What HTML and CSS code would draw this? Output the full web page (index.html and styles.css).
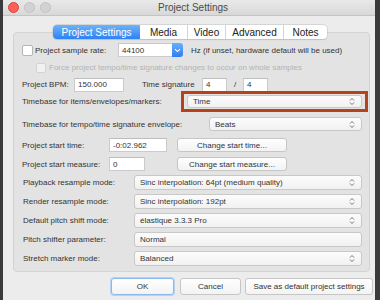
FILE: index.html
```html
<!DOCTYPE html>
<html>
<head>
<meta charset="utf-8">
<link rel="stylesheet" href="styles.css">
</head>
<body>
<div class="window">
  <div class="titlebar">
    <div class="lights">
      <span class="light red"></span>
      <span class="light"></span>
      <span class="light"></span>
    </div>
    <div class="title">Project Settings</div>
  </div>

  <div class="tabs">
    <div class="tab active t-ps">Project Settings</div>
    <div class="tab t-media">Media</div>
    <div class="tab t-video">Video</div>
    <div class="tab t-adv">Advanced</div>
    <div class="tab t-notes">Notes</div>
  </div>

  <div class="group">
    <div class="row r1">
      <span class="check"></span>
      <span class="label l-rate">Project sample rate:</span>
      <div class="srcombo">
        <span class="srfield">44100</span>
        <span class="srbtn"><svg width="7" height="5" viewBox="0 0 7 5"><path d="M1 1.2 L3.5 3.6 L6 1.2" fill="none" stroke="#fff" stroke-width="1.1"/></svg></span>
      </div>
      <span class="hz">Hz (if unset, hardware default will be used)</span>
    </div>

    <div class="row r2">
      <span class="check dis"></span>
      <span class="label disabled">Force project tempo/time signature changes to occur on whole samples</span>
    </div>

    <div class="row r3">
      <span class="label l-bpm">Project BPM:</span>
      <span class="field f-bpm">150.000</span>
      <span class="label l-ts">Time signature</span>
      <span class="field f-ts">4</span>
      <span class="slash">/</span>
      <span class="field f-ts">4</span>
    </div>

    <div class="row r4">
      <span class="label l-tb1">Timebase for items/envelopes/markers:</span>
      <div class="highlight">
        <div class="combo c-full"><span>Time</span><svg class="updown" width="6" height="9" viewBox="0 0 6 9"><path d="M1 3.5 L3 1.5 L5 3.5 M1 5.5 L3 7.5 L5 5.5" fill="none" stroke="#666" stroke-width="0.9"/></svg></div>
      </div>
    </div>

    <div class="row r5">
      <span class="label l-tb2">Timebase for tempo/time signature envelope:</span>
      <div class="combo c-beats"><span>Beats</span><svg class="updown" width="6" height="9" viewBox="0 0 6 9"><path d="M1 3.5 L3 1.5 L5 3.5 M1 5.5 L3 7.5 L5 5.5" fill="none" stroke="#666" stroke-width="0.9"/></svg></div>
    </div>

    <div class="row r6">
      <span class="label l-start">Project start time:</span>
      <span class="field f-time">-0:02.962</span>
      <span class="btn b-change g10">Change start time...</span>
    </div>

    <div class="row r7">
      <span class="label l-start">Project start measure:</span>
      <span class="field f-meas">0</span>
      <span class="btn b-change g32">Change start measure...</span>
    </div>

    <div class="row r8">
      <span class="label l-mode">Playback resample mode:</span>
      <div class="combo c-mode"><span>Sinc interpolation: 64pt (medium quality)</span><svg class="updown" width="6" height="9" viewBox="0 0 6 9"><path d="M1 3.5 L3 1.5 L5 3.5 M1 5.5 L3 7.5 L5 5.5" fill="none" stroke="#666" stroke-width="0.9"/></svg></div>
    </div>

    <div class="row r8">
      <span class="label l-mode">Render resample mode:</span>
      <div class="combo c-mode"><span>Sinc interpolation: 192pt</span><svg class="updown" width="6" height="9" viewBox="0 0 6 9"><path d="M1 3.5 L3 1.5 L5 3.5 M1 5.5 L3 7.5 L5 5.5" fill="none" stroke="#666" stroke-width="0.9"/></svg></div>
    </div>

    <div class="row r8">
      <span class="label l-mode">Default pitch shift mode:</span>
      <div class="combo c-mode"><span>élastique 3.3.3 Pro</span><svg class="updown" width="6" height="9" viewBox="0 0 6 9"><path d="M1 3.5 L3 1.5 L5 3.5 M1 5.5 L3 7.5 L5 5.5" fill="none" stroke="#666" stroke-width="0.9"/></svg></div>
    </div>

    <div class="row r8">
      <span class="label l-mode">Pitch shifter parameter:</span>
      <div class="combo c-mode"><span>Normal</span></div>
    </div>

    <div class="row r8">
      <span class="label l-mode">Stretch marker mode:</span>
      <div class="combo c-mode"><span>Balanced</span><svg class="updown" width="6" height="9" viewBox="0 0 6 9"><path d="M1 3.5 L3 1.5 L5 3.5 M1 5.5 L3 7.5 L5 5.5" fill="none" stroke="#666" stroke-width="0.9"/></svg></div>
    </div>
  </div>

  <div class="actions">
    <span class="btn big ok">OK</span>
    <span class="btn big cancel">Cancel</span>
    <span class="btn big save">Save as default project settings</span>
  </div>
</div>
</body>
</html>
```

FILE: styles.css
```css
html, body {
  margin: 0;
  padding: 0;
}
body {
  width: 380px;
  height: 300px;
  overflow: hidden;
  background: #3a3a3a;
  font-family: "Liberation Sans", Arial, sans-serif;
  font-size: 8px;
  color: #333;
}
.window {
  margin-left: 3px;
  width: 372px;
  height: 300px;
  background: #ececec;
  overflow: hidden;
}
.titlebar {
  height: 15px;
  border-bottom: 1px solid #c4c4c4;
  background: linear-gradient(#e9e9e9, #d8d8d8);
  display: flex;
  align-items: center;
  position: relative;
}
.lights {
  display: flex;
  gap: 5px;
  margin-left: 5px;
  margin-top: 0px;
}
.light {
  width: 9px;
  height: 9px;
  border-radius: 50%;
  background: #d2d2d2;
  border: 0.5px solid #c2c2c2;
}
.light.red {
  background: #fc5f57;
  border-color: #e0443e;
}
.title {
  margin-left: 107px;
  font-size: 10px;
  color: #4a4a4a;
}
.tabs {
  display: flex;
  margin-top: 9px;
  margin-left: 50px;
  height: 14px;
  position: relative;
  z-index: 1;
  width: max-content;
  background: #fff;
  border-radius: 4px;
  box-shadow: 0 0 0 0.5px #c2c2c2, 0 0.5px 1px rgba(0,0,0,0.15);
}
.tab {
  display: flex;
  align-items: center;
  justify-content: center;
  font-size: 10px;
  color: #222;
  height: 14px;
  border-left: 1px solid #d4d4d4;
  box-sizing: border-box;
}
.tab.active {
  border-left: none;
  background: linear-gradient(#6cb3fa, #2f81f4);
  color: #fff;
  border-radius: 4px 0 0 4px;
}
.t-ps { width: 87px; }
.t-media { width: 47px; border-left: none; }
.t-video { width: 38px; }
.t-adv { width: 58px; }
.t-notes { width: 44px; }

.group {
  margin-top: -7px;
  margin-left: 10px;
  width: 357px;
  height: 240px;
  box-sizing: border-box;
  border: 1px solid #d3d3d3;
  border-radius: 4px;
  background: #e3e3e3;
  padding: 10px 0 0 8px;
  display: flex;
  flex-direction: column;
}
.row {
  display: flex;
  align-items: center;
  flex: none;
}
.r1 { height: 14px; }
.r2 { height: 13px; margin-top: 4px; }
.r3 { height: 13px; margin-top: 4px; }
.r4 { height: 21px; }
.r5 { height: 14px; margin-top: 5px; }
.r6 { height: 14px; margin-top: 7px; }
.r7 { height: 14px; margin-top: 5px; }
.r8 { height: 15px; margin-top: 4px; }

.label {
  white-space: nowrap;
  flex: none;
}
.l-rate { width: 83px; margin-left: 2px; }
.l-bpm { width: 52px; }
.l-ts { width: 60px; margin-left: 18px; }
.l-tb1 { width: 159px; }
.l-tb2 { width: 187px; }
.l-start { width: 87px; }
.l-mode { width: 112px; padding-left: 1px; box-sizing: border-box; }
.disabled { color: #b3b3b3; margin-left: 3px; }

.check {
  width: 11px;
  height: 11px;
  box-sizing: border-box;
  background: #fff;
  border: 1px solid #b5b5b5;
  border-radius: 2px;
  flex: none;
}
.check.dis {
  width: 10px;
  height: 10px;
  margin-left: 14px;
  background: #f1f1f1;
  border-color: #d4d4d4;
}

.srcombo {
  display: flex;
  width: 65px;
  height: 14px;
  flex: none;
}
.srfield {
  flex: 1;
  background: #fff;
  border: 1px solid #cacaca;
  border-right: none;
  display: flex;
  align-items: center;
  padding-left: 3px;
}
.srbtn {
  width: 11px;
  background: linear-gradient(#68b0fb, #2d7ff3);
  border-radius: 0 3px 3px 0;
  display: flex;
  align-items: center;
  justify-content: center;
}
.hz {
  margin-left: 8px;
  white-space: nowrap;
}

.field {
  box-sizing: border-box;
  height: 14px;
  background: #fff;
  border: 1px solid #cbcbcb;
  border-top-color: #bdbdbd;
  display: flex;
  align-items: center;
  padding-left: 3px;
  flex: none;
}
.r3 .field { height: 14px; }
.f-bpm { width: 50px; }
.f-ts { width: 25px; }
.slash {
  width: 16px;
  text-align: center;
}
.f-time { width: 58px; }
.f-meas { width: 36px; }

.highlight {
  box-sizing: border-box;
  width: 187px;
  height: 21px;
  border: 3px solid #b4431b;
  padding: 2px 3px 2px 3px;
  display: flex;
  align-items: center;
  flex: none;
}
.combo {
  box-sizing: border-box;
  height: 15px;
  border: 1px solid #c8c8c8;
  border-radius: 3px;
  background: linear-gradient(#fcfcfc, #f1f1f1);
  display: flex;
  align-items: center;
  padding: 0 6px 0 5px;
  flex: none;
  white-space: nowrap;
}
.combo .updown { margin-left: auto; }
.c-full { width: 175px; height: 13px; }
.c-beats { width: 153px; height: 14px; }
.c-mode { width: 228px; }

.btn {
  box-sizing: border-box;
  height: 14px;
  border: 1px solid #c6c6c6;
  border-radius: 3px;
  background: linear-gradient(#fefefe, #f3f3f3);
  display: flex;
  align-items: center;
  justify-content: center;
  white-space: nowrap;
  flex: none;
}
.b-change { width: 110px; }
.g10 { margin-left: 10px; }
.g32 { margin-left: 32px; }

.actions {
  display: flex;
  margin-top: 6px;
  margin-left: 108px;
}
.btn.big { height: 17px; }
.ok {
  width: 63px;
  border-color: #8bb8ef;
  box-shadow: 0 0 0 1px #b5d2f5;
}
.cancel { width: 61px; margin-left: 6px; }
.save { width: 128px; margin-left: 4px; }
```
